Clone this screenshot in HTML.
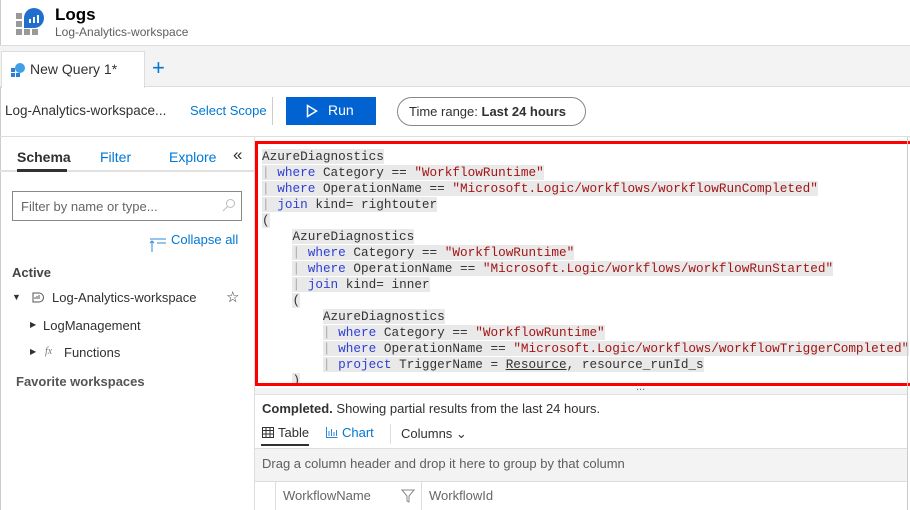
<!DOCTYPE html>
<html><head><meta charset="utf-8"><style>
*{margin:0;padding:0;box-sizing:border-box}
body{width:910px;height:510px;overflow:hidden;background:#fff;font-family:"Segoe UI","Liberation Sans",sans-serif;color:#323130;position:relative;font-size:13px}
.a{position:absolute;white-space:nowrap}
.blue{color:#0078d4}
.code{position:absolute;left:255px;top:141px;width:658px;height:245px;border:3px solid #f00;overflow:hidden;background:#fff}
.code pre{font-family:"Liberation Mono",monospace;font-size:12.7px;line-height:16px;position:absolute;left:4px;top:5px;color:#333}
.code pre span.l{background:#e9e9e9}
.k{color:#2c3fd6}.s{color:#a31515}.p{color:#aaa}
</style></head><body>
<div style="position:absolute;left:0;top:0;width:1px;height:510px;background:#ccc"></div>
<svg class="a" style="left:15px;top:7px" width="32" height="30" viewBox="0 0 32 30">
<rect x="1" y="6" width="6" height="6" fill="#999"/><rect x="1" y="14" width="6" height="6" fill="#999"/>
<rect x="1" y="22" width="6" height="6" fill="#999"/><rect x="9" y="22" width="6" height="6" fill="#999"/><rect x="17" y="22" width="6" height="6" fill="#999"/>
<circle cx="19" cy="11" r="10" fill="#1f6fce"/><rect x="9" y="11" width="10" height="10" fill="#1f6fce"/>
<rect x="14" y="12" width="2" height="4" fill="#fff"/><rect x="18" y="10" width="2" height="6" fill="#fff"/><rect x="22" y="8" width="2" height="8" fill="#fff"/>
</svg>
<div class="a" style="left:55px;top:5px;font-size:17px;font-weight:600;color:#000">Logs</div>
<div class="a" style="left:55px;top:25px;font-size:12px;color:#605e5c">Log-Analytics-workspace</div>
<div style="position:absolute;left:0;top:45px;width:910px;height:42px;background:#f3f3f3;border-top:1px solid #ddd;border-bottom:1px solid #ddd"></div>
<div style="position:absolute;left:1px;top:51px;width:144px;height:37px;background:#fff;border:1px solid #ddd;border-bottom:none"></div>
<svg class="a" style="left:10px;top:62px" width="16" height="16" viewBox="0 0 16 16"><rect x="1" y="6" width="4" height="4" fill="#2a7fd6"/><rect x="1" y="11" width="4" height="4" fill="#2a7fd6"/><rect x="6" y="11" width="4" height="4" fill="#2a7fd6"/><circle cx="10" cy="6" r="5" fill="#3fa0e8"/></svg>
<div class="a" style="left:30px;top:61px;font-size:14px;color:#323130">New Query 1*</div>
<div class="a" style="left:152px;top:55px;font-size:22px;font-weight:300;color:#0078d4">+</div>
<div class="a" style="left:5px;top:103px;font-size:13.5px">Log-Analytics-workspace...</div>
<div class="a blue" style="left:190px;top:103px;font-size:13px">Select Scope</div>
<div style="position:absolute;left:272px;top:97px;width:1px;height:28px;background:#ccc"></div>
<div style="position:absolute;left:286px;top:97px;width:90px;height:28px;background:#0063d1"></div>
<svg class="a" style="left:306px;top:104px" width="12" height="14" viewBox="0 0 12 14"><path d="M1.5 1.5L10.5 7 1.5 12.5z" fill="none" stroke="#fff" stroke-width="1.5"/></svg>
<div class="a" style="left:328px;top:102px;font-size:14px;color:#fff">Run</div>
<div style="position:absolute;left:397px;top:97px;width:189px;height:29px;border:1px solid #8a8886;border-radius:15px"></div>
<div class="a" style="left:409px;top:104px;font-size:13px">Time range: <b style="font-weight:600">Last 24 hours</b></div>
<div style="position:absolute;left:0;top:136px;width:910px;height:1px;background:#ddd"></div>
<div style="position:absolute;left:254px;top:137px;width:1px;height:373px;background:#ddd"></div>
<div class="a" style="left:17px;top:149px;font-size:14px;font-weight:600">Schema</div>
<div class="a blue" style="left:100px;top:149px;font-size:14px">Filter</div>
<div class="a blue" style="left:169px;top:149px;font-size:14px">Explore</div>
<div class="a" style="left:233px;top:145px;font-size:17px">«</div>
<div style="position:absolute;left:0;top:170px;width:254px;height:2px;background:#e1e1e1"></div>
<div style="position:absolute;left:17px;top:169px;width:50px;height:3px;background:#323130"></div>
<div style="position:absolute;left:12px;top:191px;width:230px;height:30px;border:1px solid #8a8886"></div>
<div class="a" style="left:21px;top:199px;font-size:13px;color:#666">Filter by name or type...</div>
<svg class="a" style="left:222px;top:198px" width="14" height="14" viewBox="0 0 14 14"><circle cx="8.5" cy="5.5" r="4" fill="none" stroke="#bbb"/><path d="M5.5 8.5L1 13" stroke="#bbb"/></svg>
<svg class="a" style="left:149px;top:236px" width="18" height="16" viewBox="0 0 18 16"><path d="M1 3h16M8 7h9M3 5v11M1 7l2-2 2 2" stroke="#2b88d8" fill="none"/></svg>
<div class="a blue" style="left:171px;top:232px;font-size:13px">Collapse all</div>
<div class="a" style="left:12px;top:265px;font-size:13px;font-weight:600;color:#444">Active</div>
<div class="a" style="left:12px;top:292px;font-size:9px">▼</div>
<svg class="a" style="left:30px;top:291px" width="14" height="14" viewBox="0 0 14 14"><path d="M3 2h6a4.5 4.5 0 0 1 0 9H3z" fill="none" stroke="#555"/><path d="M5 8v-2M7 8v-3M9 8v-4" stroke="#555"/></svg>
<div class="a" style="left:52px;top:290px;font-size:13px">Log-Analytics-workspace</div>
<div class="a" style="left:226px;top:288px;font-size:15px">☆</div>
<div class="a" style="left:30px;top:320px;font-size:8px">▶</div>
<div class="a" style="left:43px;top:318px;font-size:13px">LogManagement</div>
<div class="a" style="left:30px;top:347px;font-size:8px">▶</div>
<div class="a" style="left:45px;top:346px;font-size:10px;font-style:italic;color:#777;font-family:'Liberation Serif',serif">fx</div>
<div class="a" style="left:64px;top:345px;font-size:13px">Functions</div>
<div class="a" style="left:16px;top:374px;font-size:13px;font-weight:600;color:#555">Favorite workspaces</div>
<div class="code"><pre><span class="l">AzureDiagnostics</span>
<span class="l"><span class="p">|</span> <span class="k">where</span> Category == <span class="s">"WorkflowRuntime"</span></span>
<span class="l"><span class="p">|</span> <span class="k">where</span> OperationName == <span class="s">"Microsoft.Logic/workflows/workflowRunCompleted"</span></span>
<span class="l"><span class="p">|</span> <span class="k">join</span> kind= rightouter</span>
<span class="l">(</span>
    <span class="l">AzureDiagnostics</span>
    <span class="l"><span class="p">|</span> <span class="k">where</span> Category == <span class="s">"WorkflowRuntime"</span></span>
    <span class="l"><span class="p">|</span> <span class="k">where</span> OperationName == <span class="s">"Microsoft.Logic/workflows/workflowRunStarted"</span></span>
    <span class="l"><span class="p">|</span> <span class="k">join</span> kind= inner</span>
    <span class="l">(</span>
        <span class="l">AzureDiagnostics</span>
        <span class="l"><span class="p">|</span> <span class="k">where</span> Category == <span class="s">"WorkflowRuntime"</span></span>
        <span class="l"><span class="p">|</span> <span class="k">where</span> OperationName == <span class="s">"Microsoft.Logic/workflows/workflowTriggerCompleted"</span></span>
        <span class="l"><span class="p">|</span> <span class="k">project</span> TriggerName = <u>Resource</u>, resource_runId_s</span>
    <span class="l">)</span></pre></div>
<div style="position:absolute;left:907px;top:137px;width:1px;height:373px;background:#ccc"></div>
<div style="position:absolute;left:255px;top:388px;width:652px;height:7px;background:#f3f3f3;border-bottom:1px solid #e1e1e1"></div>
<div class="a" style="left:636px;top:381px;font-size:11px;color:#666">...</div>
<div class="a" style="left:262px;top:401px;font-size:13px"><b style="font-weight:600">Completed.</b> Showing partial results from the last 24 hours.</div>
<svg class="a" style="left:262px;top:427px" width="12" height="11" viewBox="0 0 12 11"><path d="M0.5 0.5h11v10h-11zM0.5 3.5h11M0.5 7h11M4 0.5v10M8 0.5v10" stroke="#333" fill="none"/></svg>
<div class="a" style="left:278px;top:425px;font-size:13px">Table</div>
<div style="position:absolute;left:261px;top:444px;width:48px;height:2px;background:#323130"></div>
<svg class="a" style="left:326px;top:427px" width="12" height="11" viewBox="0 0 12 11"><path d="M0.5 0v10.5h11M3 9V4M5.5 9V2M8 9V5M10.5 9V3" stroke="#2b88d8" fill="none"/></svg>
<div class="a blue" style="left:342px;top:425px;font-size:13px">Chart</div>
<div style="position:absolute;left:390px;top:424px;width:1px;height:20px;background:#ddd"></div>
<div class="a" style="left:401px;top:426px;font-size:13px">Columns ⌄</div>
<div style="position:absolute;left:255px;top:448px;width:652px;height:34px;background:#f3f3f3;border-top:1px solid #ddd;border-bottom:1px solid #ddd"></div>
<div class="a" style="left:262px;top:456px;font-size:13px;color:#605e5c">Drag a column header and drop it here to group by that column</div>
<div style="position:absolute;left:275px;top:482px;width:1px;height:28px;background:#ddd"></div>
<div style="position:absolute;left:421px;top:482px;width:1px;height:28px;background:#ddd"></div>
<div class="a" style="left:283px;top:488px;font-size:13px;color:#666">WorkflowName</div>
<svg class="a" style="left:401px;top:489px" width="14" height="14" viewBox="0 0 14 14"><path d="M1 1h12L8 7v6L6 12V7z" fill="none" stroke="#888"/></svg>
<div class="a" style="left:429px;top:488px;font-size:13px;color:#666">WorkflowId</div>
</body></html>
